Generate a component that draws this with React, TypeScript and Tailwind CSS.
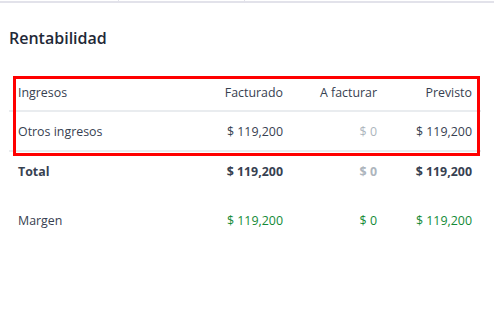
export default function App() {
  const rows = [
    { label: "Otros ingresos", a: "$ 119,200", b: "$ 0", c: "$ 119,200" },
  ];

  return (
    <div className="w-[494px] h-[315px] bg-white text-[#374151] font-['Open_Sans',sans-serif] text-[12.4px] overflow-hidden">
      {/* tabs strip */}
      <div className="flex h-[3px] border-b-2 border-[#e2e2ea]">
        <div className="w-[119px] border-r border-[#e2e2ea]" />
        <div className="w-[126px] border-r border-[#e2e2ea]" />
      </div>

      <h2 className="mt-[23px] ml-[9px] text-[16px] leading-6 font-semibold text-[#1f2937]">
        Rentabilidad
      </h2>

      <div className="relative mt-[27px] ml-[9px] w-[472px]">
        <div className="grid grid-cols-[187px_95px_95px_95px]">
          {/* header */}
          <div className="h-[35px] flex items-center pl-[9px] border-b-2 border-[#e9ecef]">Ingresos</div>
          <div className="h-[35px] flex items-center justify-end pr-[8px] border-b-2 border-[#e9ecef]">Facturado</div>
          <div className="h-[35px] flex items-center justify-end pr-[9px] border-b-2 border-[#e9ecef]">A facturar</div>
          <div className="h-[35px] flex items-center justify-end pr-[9px] border-b-2 border-[#e9ecef]">Previsto</div>

          {rows.map((r) => (
            <>
              <div key={r.label} className="h-[40px] pt-[2px] flex items-center pl-[9px] border-b-2 border-[#e9ecef]">{r.label}</div>
              <div className="h-[40px] pt-[2px] flex items-center justify-end pr-[8px] border-b-2 border-[#e9ecef]">{r.a}</div>
              <div className="h-[40px] pt-[2px] flex items-center justify-end pr-[9px] border-b-2 border-[#e9ecef] text-[#adb5bd]">{r.b}</div>
              <div className="h-[40px] pt-[2px] flex items-center justify-end pr-[9px] border-b-2 border-[#e9ecef]">{r.c}</div>
            </>
          ))}

          {/* total */}
          <div className="h-[40px] flex items-center pl-[9px] font-bold">Total</div>
          <div className="h-[40px] flex items-center justify-end pr-[8px] font-bold">$ 119,200</div>
          <div className="h-[40px] flex items-center justify-end pr-[9px] font-bold text-[#adb5bd]">$ 0</div>
          <div className="h-[40px] flex items-center justify-end pr-[9px] font-bold">$ 119,200</div>

          {/* margen */}
          <div className="mt-[9px] h-[40px] flex items-center pl-[9px]">Margen</div>
          <div className="mt-[9px] h-[40px] flex items-center justify-end pr-[8px] text-[#138a36]">$ 119,200</div>
          <div className="mt-[9px] h-[40px] flex items-center justify-end pr-[9px] text-[#138a36]">$ 0</div>
          <div className="mt-[9px] h-[40px] flex items-center justify-end pr-[9px] text-[#138a36]">$ 119,200</div>
        </div>

        {/* highlight annotation */}
        <div className="absolute left-[4px] top-[-1px] w-[467px] h-[80px] border-[3px] border-[#ff0000] pointer-events-none" />
      </div>
    </div>
  );
}
